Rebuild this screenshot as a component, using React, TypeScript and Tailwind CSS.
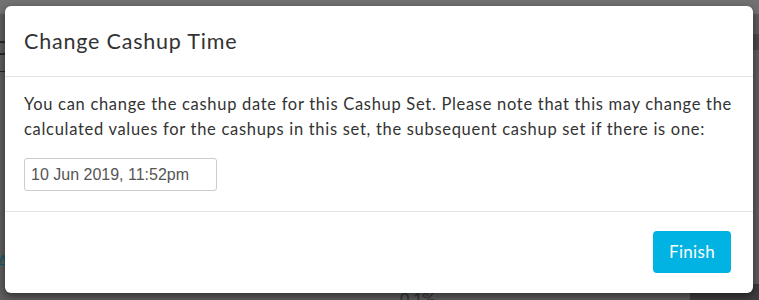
import React from 'react';

const font = { fontFamily: 'Lato, "Open Sans", sans-serif' };

export default function App() {
  return (
    <div className="relative h-[300px] w-[759px] overflow-hidden bg-[#5e5e5e]" style={font}>
      {/* faint page behind the backdrop */}
      <div className="absolute left-0 top-0 h-[14px] w-full bg-[#727272]" />
      <div className="absolute left-[-6px] top-[32px] text-[20px] text-[#222]">C</div>
      <div className="absolute left-0 top-[71px] h-px w-[6px] bg-[#222]" />
      <div className="absolute left-[-4px] top-[246px] text-[20px] text-[#1d5a6a]">A</div>
      <div className="absolute left-[400px] top-[286px] text-[16px] text-[#333]">0.1%</div>
      <div className="absolute left-[690px] top-[284px] h-[20px] w-[70px] bg-[#3d3d3d]" />
      <div className="absolute right-0 top-[34px] h-[16px] w-[6px] bg-[#4a4a4a]" />

      {/* modal */}
      <div className="absolute left-[5px] top-[6px] w-[748px] rounded-[6px] bg-white shadow-[0_3px_8px_rgba(0,0,0,0.5)]">
        <div className="flex h-[71px] items-center border-b border-[#e5e5e5] px-[19px]">
          <h2 className="text-[21.5px] font-normal tracking-[0.8px] text-[#333]">Change Cashup Time</h2>
        </div>
        <div className="border-b border-[#e5e5e5] px-[19px] pb-[20px] pt-[15px]">
          <p className="text-[16.5px] leading-[25px] tracking-[0.7px] text-[#333]">
            You can change the cashup date for this Cashup Set. Please note that this may change the
            <br />
            calculated values for the cashups in this set, the subsequent cashup set if there is one:
          </p>
          <input
            readOnly
            value="10 Jun 2019, 11:52pm"
            className="mt-[16px] block h-[33px] w-[193px] rounded-[3px] border border-[#ccc] px-[6px] text-[16px] text-[#555] outline-none"
            style={{ fontFamily: '"Liberation Sans", Arial, sans-serif' }}
          />
        </div>
        <div className="flex h-[81px] items-start justify-end px-[22px] pt-[19px]">
          <button className="h-[42px] w-[78px] rounded-[4px] bg-[#00b3e3] text-[17px] tracking-[0.3px] text-white">
            Finish
          </button>
        </div>
      </div>
    </div>
  );
}
